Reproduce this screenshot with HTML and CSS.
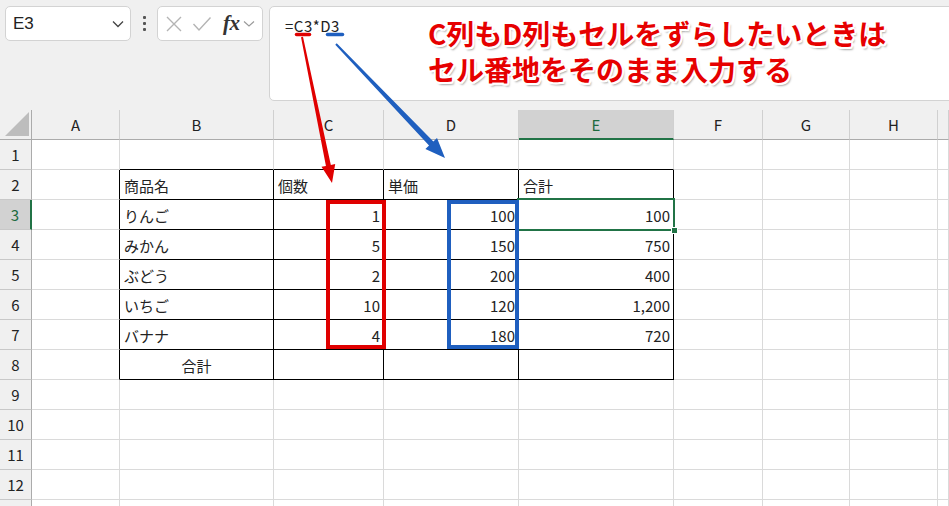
FILE: index.html
```html
<!DOCTYPE html>
<html lang="ja">
<head>
<meta charset="utf-8">
<title>Excel</title>
<link rel="stylesheet" href="styles.css">
</head>
<body>
<div class="app">
  <div class="toolbar">
    <div class="namebox">
      <span class="nametext">E3</span>
      <svg class="chev" width="12" height="8" viewBox="0 0 12 8"><path d="M1 1.5 L6 6.5 L11 1.5" fill="none" stroke="#444" stroke-width="1.3"/></svg>
    </div>
    <div class="dots"><i></i><i></i><i></i></div>
    <div class="fxbox">
      <svg class="ico" width="18" height="18" viewBox="0 0 18 18"><path d="M2 2 L16 16 M16 2 L2 16" stroke="#b4b4b4" stroke-width="1.4" fill="none"/></svg>
      <svg class="ico" width="20" height="18" viewBox="0 0 20 18"><path d="M1.5 9 L7 15 L18.5 2.5" stroke="#b4b4b4" stroke-width="1.4" fill="none"/></svg>
      <span class="fx">fx</span>
      <svg class="chev2" width="12" height="8" viewBox="0 0 12 8"><path d="M1 1.5 L6 6 L11 1.5" fill="none" stroke="#999" stroke-width="1.1"/></svg>
    </div>
    <div class="formula"><span class="ftext">=C3*D3</span></div>
  </div>

  <div class="sheet">
    <div class="h corner"><svg width="24" height="24" viewBox="0 0 24 24"><path d="M24 0 L24 24 L0 24 Z" fill="#bdbdbd"/></svg></div>
    <div class="h col">A</div>
    <div class="h col">B</div>
    <div class="h col">C</div>
    <div class="h col">D</div>
    <div class="h col sel">E</div>
    <div class="h col">F</div>
    <div class="h col">G</div>
    <div class="h col">H</div>
    <div class="h col"></div>

    <div class="h row">1</div>
    <div class="c"></div><div class="c tb"></div><div class="c tb"></div><div class="c tb"></div><div class="c tb"></div><div class="c"></div><div class="c"></div><div class="c"></div><div class="c"></div>

    <div class="h row">2</div>
    <div class="c tr"></div><div class="c t">商品名</div><div class="c t">個数</div><div class="c t">単価</div><div class="c t">合計</div><div class="c"></div><div class="c"></div><div class="c"></div><div class="c"></div>

    <div class="h row rsel">3</div>
    <div class="c tr"></div><div class="c t">りんご</div><div class="c t n">1</div><div class="c t n">100</div><div class="c t n">100</div><div class="c"></div><div class="c"></div><div class="c"></div><div class="c"></div>

    <div class="h row">4</div>
    <div class="c tr"></div><div class="c t">みかん</div><div class="c t n">5</div><div class="c t n">150</div><div class="c t n">750</div><div class="c"></div><div class="c"></div><div class="c"></div><div class="c"></div>

    <div class="h row">5</div>
    <div class="c tr"></div><div class="c t">ぶどう</div><div class="c t n">2</div><div class="c t n">200</div><div class="c t n">400</div><div class="c"></div><div class="c"></div><div class="c"></div><div class="c"></div>

    <div class="h row">6</div>
    <div class="c tr"></div><div class="c t">いちご</div><div class="c t n">10</div><div class="c t n">120</div><div class="c t n">1,200</div><div class="c"></div><div class="c"></div><div class="c"></div><div class="c"></div>

    <div class="h row">7</div>
    <div class="c tr"></div><div class="c t">バナナ</div><div class="c t n">4</div><div class="c t n">180</div><div class="c t n">720</div><div class="c"></div><div class="c"></div><div class="c"></div><div class="c"></div>

    <div class="h row">8</div>
    <div class="c tr"></div><div class="c t ctr">合計</div><div class="c t"></div><div class="c t"></div><div class="c t"></div><div class="c"></div><div class="c"></div><div class="c"></div><div class="c"></div>

    <div class="h row">9</div>
    <div class="c"></div><div class="c"></div><div class="c"></div><div class="c"></div><div class="c"></div><div class="c"></div><div class="c"></div><div class="c"></div><div class="c"></div>
    <div class="h row">10</div>
    <div class="c"></div><div class="c"></div><div class="c"></div><div class="c"></div><div class="c"></div><div class="c"></div><div class="c"></div><div class="c"></div><div class="c"></div>
    <div class="h row">11</div>
    <div class="c"></div><div class="c"></div><div class="c"></div><div class="c"></div><div class="c"></div><div class="c"></div><div class="c"></div><div class="c"></div><div class="c"></div>
    <div class="h row">12</div>
    <div class="c"></div><div class="c"></div><div class="c"></div><div class="c"></div><div class="c"></div><div class="c"></div><div class="c"></div><div class="c"></div><div class="c"></div>
    <div class="h row"></div>
    <div class="c"></div><div class="c"></div><div class="c"></div><div class="c"></div><div class="c"></div><div class="c"></div><div class="c"></div><div class="c"></div><div class="c"></div>
  </div>

  <div class="active"><i class="handle"></i></div>
  <div class="mark mark-red"></div>
  <div class="mark mark-blue"></div>

  <div class="note">
    <div class="note-line">C列もD列もセルをずらしたいときは</div>
    <div class="note-line">セル番地をそのまま入力する</div>
  </div>

  <svg class="overlay" width="949" height="506" viewBox="0 0 949 506">
    <line x1="296.5" y1="34.5" x2="309.5" y2="34.5" stroke="#e00000" stroke-width="3.5" stroke-linecap="round"/>
    <line x1="327.5" y1="34.5" x2="342.5" y2="34.5" stroke="#1f5fbf" stroke-width="3.5" stroke-linecap="round"/>
    <polygon points="301.02,37.2 302.98,36.8 330.85,164.9 335.2,164 332,183 321.5,166.8 325.95,165.9" fill="#e00000"/>
    <polygon points="335.28,44.69 336.72,43.31 433.37,141.43 437,138 445,158 425.4,149 429.03,145.57" fill="#1f5fbf"/>
  </svg>
</div>
</body>
</html>
```

FILE: styles.css
```css
* { box-sizing: border-box; }
html, body { margin: 0; padding: 0; }
body {
  width: 949px;
  height: 506px;
  overflow: hidden;
  background: #f0f0f0;
  font-family: "Noto Sans CJK JP", "Noto Sans", sans-serif;
  color: #222;
}
.app { position: relative; width: 949px; height: 506px; overflow: hidden; }

.toolbar {
  height: 110px;
  display: flex;
  align-items: flex-start;
  padding: 6px 0 0 5px;
  overflow: hidden;
}
.namebox {
  width: 126px;
  height: 35px;
  background: #fff;
  border: 1px solid #d3d3d3;
  border-radius: 5px;
  display: flex;
  align-items: center;
  justify-content: space-between;
  padding: 0 6px 0 7px;
}
.nametext { font-family: "Liberation Sans", sans-serif; font-size: 17px; color: #222; }
.chev { display: block; }
.dots {
  width: 26px;
  height: 35px;
  display: flex;
  flex-direction: column;
  align-items: center;
  justify-content: center;
  gap: 3px;
}
.dots i { display: block; width: 3px; height: 3px; background: #555; border-radius: 1px; }
.fxbox {
  width: 106px;
  height: 35px;
  background: #fff;
  border: 1px solid #d3d3d3;
  border-radius: 5px;
  display: flex;
  align-items: center;
  padding-left: 7px;
}
.fxbox .ico { display: block; margin-right: 9px; }
.fx {
  font-family: "Liberation Serif", serif;
  font-style: italic;
  font-weight: bold;
  font-size: 21px;
  color: #333;
  margin-left: 2px;
  letter-spacing: -0.5px;
}
.chev2 { display: block; margin-left: 3px; }
.formula {
  flex: 1;
  height: 95px;
  margin-left: 6px;
  margin-right: -10px;
  background: #fff;
  border: 1px solid #d3d3d3;
  border-radius: 5px;
  padding: 6px 0 0 15px;
}
.ftext { font-size: 15px; color: #222; letter-spacing: 0.5px; }

.sheet {
  display: grid;
  grid-template-columns: 32px 88px 154px 110px 135px 155px 89px 87px 88px 1fr;
  grid-template-rows: repeat(14, 30px);
  background: #fff;
  height: 396px;
  overflow: hidden;
}
.sheet > div {
  font-size: 15px;
  display: flex;
  align-items: center;
  white-space: nowrap;
  overflow: hidden;
}
.h {
  background: #f0f0f0;
  justify-content: center;
  color: #222;
}
.col { border-right: 1px solid #d0d0d0; border-bottom: 1px solid #ababab; }
.corner { border-right: 1px solid #ababab; border-bottom: 1px solid #ababab; align-items: flex-end !important; justify-content: flex-end !important; padding: 0 2px 3px 0; }
.corner svg { display: block; }
.row { border-right: 1px solid #ababab; border-bottom: 1px solid #c8c8c8; }
.sel { background: #d2d2d2; color: #1d6b3e; border-bottom: 2px solid #217346; }
.rsel { background: #d2d2d2; color: #1d6b3e; border-right: 2px solid #217346; }
.c { border-right: 1px solid #dadada; border-bottom: 1px solid #dadada; padding: 2px 4px 0 4px; }
.c.tb { border-bottom-color: #000; }
.c.tr { border-right-color: #000; }
.c.t { border-right-color: #000; border-bottom-color: #000; }
.c.n { justify-content: flex-end; padding-right: 3px; }
.c.ctr { justify-content: center; }

.active {
  position: absolute;
  left: 517px;
  top: 198px;
  width: 158px;
  height: 33px;
  border: 2px solid #217346;
}
.handle {
  position: absolute;
  right: -5px;
  bottom: -5px;
  width: 7px;
  height: 7px;
  background: #217346;
  border: 1px solid #fff;
}
.mark { position: absolute; top: 200px; height: 149px; border: 4px solid; }
.mark-red { left: 326px; width: 60px; border-color: #e00000; }
.mark-blue { left: 447px; width: 72px; border-color: #1f5fbf; }

.note {
  position: absolute;
  left: 428px;
  top: 15px;
  display: flex;
  flex-direction: column;
  font-size: 28px;
  font-weight: bold;
  color: #e60000;
  white-space: nowrap;
  text-shadow:
    2px 0 0 #fff, -2px 0 0 #fff, 0 2px 0 #fff, 0 -2px 0 #fff,
    1.5px 1.5px 0 #fff, -1.5px 1.5px 0 #fff, 1.5px -1.5px 0 #fff, -1.5px -1.5px 0 #fff,
    2px 3px 2px rgba(0,0,0,0.35);
}
.note-line { height: 36px; line-height: 36px; }
.overlay { position: absolute; left: 0; top: 0; pointer-events: none; }
```
